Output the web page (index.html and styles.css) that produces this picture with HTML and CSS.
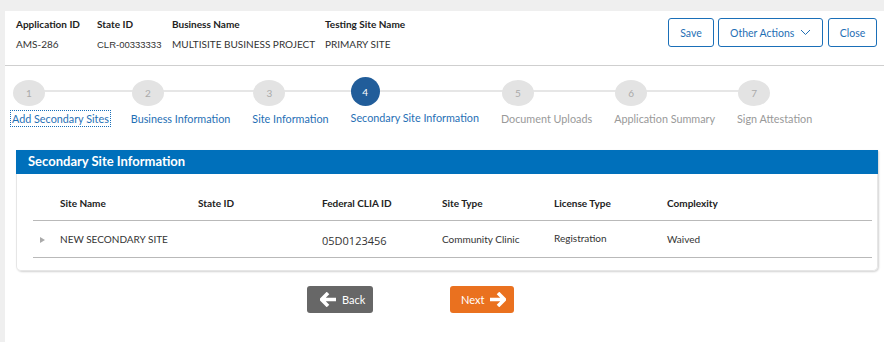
FILE: index.html
```html
<!DOCTYPE html>
<html>

<head>
    <title>Secondary Site Information</title>
    <link rel="stylesheet" href="styles.css">
</head>

<body>
    <div id="page">
        <div class="app-header">
            <div class="app-fields">
                <div class="field f-app">
                    <div class="field-label">Application ID</div>
                    <div class="field-value">AMS-286</div>
                </div>
                <div class="field f-state">
                    <div class="field-label">State ID</div>
                    <div class="field-value narrow">CLR-00333333</div>
                </div>
                <div class="field f-biz">
                    <div class="field-label">Business Name</div>
                    <div class="field-value">MULTISITE BUSINESS PROJECT</div>
                </div>
                <div class="field">
                    <div class="field-label">Testing Site Name</div>
                    <div class="field-value">PRIMARY SITE</div>
                </div>
            </div>
            <div class="app-actions">
                <button class="btn-outline b-save">Save</button>
                <button class="btn-outline b-other">Other Actions
                    <svg class="chev" width="11" height="7" viewBox="0 0 11 7"><path d="M1 1l4.5 4.5L10 1" fill="none" stroke="#1f6fb5" stroke-width="1"/></svg>
                </button>
                <button class="btn-outline b-close">Close</button>
            </div>
        </div>

        <div class="stepper">
            <div class="step-line"></div>
            <div class="step done">
                <span class="dot">1</span>
                <span class="step-name focus">Add Secondary Sites</span>
            </div>
            <div class="step done">
                <span class="dot">2</span>
                <span class="step-name">Business Information</span>
            </div>
            <div class="step done">
                <span class="dot">3</span>
                <span class="step-name">Site Information</span>
            </div>
            <div class="step current">
                <span class="dot">4</span>
                <span class="step-name">Secondary Site Information</span>
            </div>
            <div class="step">
                <span class="dot">5</span>
                <span class="step-name">Document Uploads</span>
            </div>
            <div class="step">
                <span class="dot">6</span>
                <span class="step-name">Application Summary</span>
            </div>
            <div class="step">
                <span class="dot">7</span>
                <span class="step-name">Sign Attestation</span>
            </div>
        </div>

        <div class="panel">
            <div class="panel-title">Secondary Site Information</div>
            <table class="sites">
                <thead>
                    <tr>
                        <th class="c-arrow"></th>
                        <th class="c-name">Site Name</th>
                        <th class="c-state">State ID</th>
                        <th class="c-clia">Federal CLIA ID</th>
                        <th class="c-type">Site Type</th>
                        <th class="c-lic">License Type</th>
                        <th>Complexity</th>
                    </tr>
                </thead>
                <tbody>
                    <tr>
                        <td class="c-arrow"><span class="caret"></span></td>
                        <td>NEW SECONDARY SITE</td>
                        <td></td>
                        <td class="clia">05D0123456</td>
                        <td>Community Clinic</td>
                        <td class="up">Registration</td>
                        <td>Waived</td>
                    </tr>
                </tbody>
            </table>
        </div>

        <div class="nav-buttons">
            <button class="btn-back">
                <svg width="17" height="15" viewBox="0 0 17 15"><path d="M8 1L1.5 7.5 8 14M2 7.5h14" fill="none" stroke="#fff" stroke-width="3.6" stroke-linejoin="miter"/></svg>
                Back
            </button>
            <button class="btn-next">
                Next
                <svg width="17" height="15" viewBox="0 0 17 15"><path d="M9 1l6.5 6.5L9 14M15 7.5H1" fill="none" stroke="#fff" stroke-width="3.6" stroke-linejoin="miter"/></svg>
            </button>
        </div>
    </div>
</body>

</html>
```

FILE: styles.css
```css
body {
    margin: 0;
    background-color: #efefef;
    font-family: Lato, "Open Sans", sans-serif;
    color: #222;
}

#page {
    margin: 11px 0 0 5px;
    background-color: #fff;
    height: 331px;
}

.app-header {
    display: flex;
    justify-content: space-between;
    height: 54px;
    border-bottom: 1px solid #cfcfcf;
    padding: 0 7px 0 11px;
}

.app-fields {
    display: flex;
    padding-top: 7px;
}

.field {
    font-size: 10px;
}

.f-app {
    width: 81px;
}

.f-state {
    width: 75px;
}

.f-biz {
    width: 153px;
}

.field-label {
    font-weight: bold;
    color: #222;
    height: 20px;
}

.field-value {
    color: #333;
}

.field-value.narrow {
    font-family: "Liberation Sans Narrow", "Liberation Sans", sans-serif;
    font-size: 9.5px;
    padding-top: 1px;
}

.app-actions {
    display: flex;
    gap: 4px;
    padding-top: 7px;
}

.btn-outline {
    height: 29px;
    padding: 0;
    background: #fff;
    border: 1px solid #1a6fb8;
    border-radius: 3px;
    color: #1f6fb5;
    font-family: inherit;
    font-size: 10.5px;
}

.b-save {
    width: 46px;
}

.b-other {
    width: 105px;
}

.b-close {
    width: 49px;
    margin-left: 1px;
}

.chev {
    margin-left: 3px;
    vertical-align: 1px;
}

/* progress steps */
.stepper {
    position: relative;
    display: flex;
    gap: 22px;
    padding: 11px 0 0 7px;
    height: 73px;
    box-sizing: border-box;
}

.step-line {
    position: absolute;
    left: 30px;
    right: 125px;
    top: 24px;
    height: 2px;
    background-color: #e6e6e6;
}

.step {
    position: relative;
    display: flex;
    flex-direction: column;
    align-items: flex-start;
}

.dot {
    display: flex;
    align-items: center;
    justify-content: center;
    width: 32px;
    height: 26px;
    margin: 3px 0 6px 1px;
    border-radius: 50%;
    background-color: #e3e3e3;
    color: #aaa;
    font-size: 10px;
}

.current .dot {
    width: 29px;
    height: 29px;
    margin: 0 0 5px 0;
    background-color: #215d9a;
    color: #fff;
}

.step-name {
    font-size: 10.8px;
    color: #999;
    white-space: nowrap;
}

.done .step-name,
.current .step-name {
    color: #1f6fb5;
}

.focus {
    outline: 1px dotted #1a6fb8;
    outline-offset: 1px;
}

/* panel */
.panel {
    margin: 11px 0 0 11px;
    width: 862px;
    height: 121px;
    border: 1px solid #e6e6e6;
    border-top: none;
    border-radius: 0 0 5px 5px;
    box-shadow: 1px 1px 2px rgba(0, 0, 0, 0.18);
    box-sizing: border-box;
}

.panel-title {
    background-color: #0070bb;
    color: #fff;
    font-size: 13px;
    font-weight: bold;
    height: 24px;
    line-height: 23px;
    padding-left: 12px;
    margin: 0 -1px;
}

.sites {
    margin: 11px 0 0 16px;
    width: 839px;
    border-collapse: collapse;
    font-size: 10px;
}

.sites th {
    text-align: left;
    font-weight: bold;
    color: #222;
    height: 20px;
    padding: 8px 0 7px;
    border-bottom: 1px solid #b9b9b9;
}

.sites td {
    color: #333;
    height: 33px;
    border-bottom: 1px solid #b9b9b9;
    padding: 0;
}

.c-arrow {
    width: 27px;
}

.c-name {
    width: 138px;
}

.c-state {
    width: 124px;
}

.c-clia {
    width: 120px;
}

.c-type {
    width: 112px;
}

.c-lic {
    width: 113px;
}

.caret {
    display: inline-block;
    margin-left: 7px;
    border-left: 5px solid #aaa;
    border-top: 3px solid transparent;
    border-bottom: 3px solid transparent;
}

.clia {
    font-family: "Open Sans", sans-serif;
    font-size: 11px;
    padding-top: 3px !important;
}

.up {
    padding-bottom: 3px !important;
}

/* back / next */
.nav-buttons {
    display: flex;
    gap: 77px;
    padding: 15px 0 0 302px;
}

.nav-buttons button {
    display: flex;
    align-items: center;
    gap: 5px;
    height: 27px;
    border: none;
    border-radius: 3px;
    color: #fff;
    font-family: inherit;
    font-size: 11px;
    cursor: pointer;
}

.btn-back {
    width: 66px;
    padding: 0 0 0 13px;
    background-color: #676767;
}

.btn-next {
    width: 64px;
    padding: 0 0 0 11px;
    background-color: #ea711f;
}
```
